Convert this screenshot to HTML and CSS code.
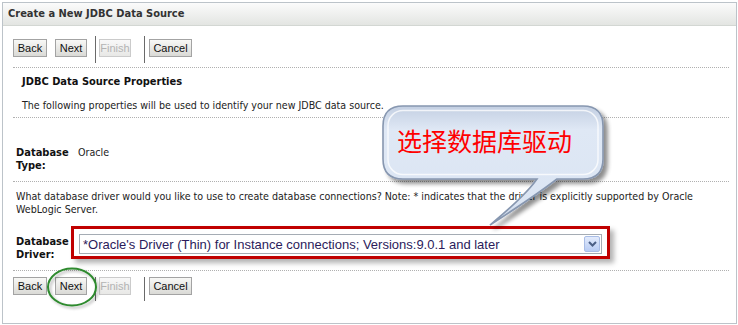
FILE: index.html
```html
<!DOCTYPE html>
<html lang="en">
<head>
<meta charset="utf-8">
<title>Create a New JDBC Data Source</title>
<link rel="stylesheet" href="styles.css">
</head>
<body>
<div class="frame">
  <div class="header">Create a New JDBC Data Source</div>
  <div class="body">
    <div class="toolbar top">
      <button type="button" class="btn btn-back">Back</button>
      <button type="button" class="btn btn-next">Next</button>
      <span class="sep sep1"></span>
      <button type="button" class="btn btn-finish" disabled>Finish</button>
      <span class="sep sep2"></span>
      <button type="button" class="btn btn-cancel">Cancel</button>
    </div>
    <div class="section props">
      <h2 class="title">JDBC Data Source Properties</h2>
      <p class="desc">The following properties will be used to identify your new JDBC data source.</p>
    </div>
    <div class="section type-row">
      <div class="row">
        <div class="label">Database Type:</div>
        <div class="value">Oracle</div>
      </div>
    </div>
    <div class="section driver-sec">
      <p class="note">What database driver would you like to use to create database connections? Note: * indicates that the driver is explicitly supported by Oracle<br>WebLogic Server.</p>
      <div class="row driver-row">
        <div class="label label-driver">Database Driver:</div>
        <div class="highlight">
          <div class="select">
            <span class="select-text">*Oracle's Driver (Thin) for Instance connections; Versions:9.0.1 and later</span>
            <span class="select-arrow"><svg width="9" height="6" viewBox="0 0 9 6"><path d="M1 1 L4.5 4.5 L8 1" fill="none" stroke="#4b5f86" stroke-width="2"/></svg></span>
          </div>
        </div>
      </div>
    </div>
    <div class="section bottom-sec">
      <div class="toolbar bottom">
        <button type="button" class="btn btn-back">Back</button>
        <button type="button" class="btn btn-next">Next</button>
        <span class="sep sep1"></span>
        <button type="button" class="btn btn-finish" disabled>Finish</button>
        <span class="sep sep2"></span>
        <button type="button" class="btn btn-cancel">Cancel</button>
      </div>
    </div>
  </div>
</div>
<svg class="overlay" width="738" height="325" viewBox="0 0 738 325">
  <defs>
    <linearGradient id="bub" x1="0" y1="0" x2="0" y2="1">
      <stop offset="0" stop-color="#c3cfe2"/>
      <stop offset="0.2" stop-color="#dfe8f5"/>
      <stop offset="0.8" stop-color="#dbe5f3"/>
      <stop offset="1" stop-color="#c9d5e7"/>
    </linearGradient>
    <filter id="sh" x="-10%" y="-10%" width="130%" height="140%">
      <feGaussianBlur in="SourceAlpha" stdDeviation="2.2"/>
      <feOffset dx="4" dy="4" result="o"/>
      <feComponentTransfer><feFuncA type="linear" slope="0.45"/></feComponentTransfer>
      <feMerge><feMergeNode/><feMergeNode in="SourceGraphic"/></feMerge>
    </filter>
    <filter id="sh2" x="-20%" y="-20%" width="150%" height="150%">
      <feGaussianBlur in="SourceAlpha" stdDeviation="1.5"/>
      <feOffset dx="2" dy="2"/>
      <feComponentTransfer><feFuncA type="linear" slope="0.3"/></feComponentTransfer>
      <feMerge><feMergeNode/><feMergeNode in="SourceGraphic"/></feMerge>
    </filter>
  </defs>
  <path d="M403 106 H583 Q603 106 603 126 V159 Q603 179 583 179 H557 Q535 196 490 225 Q525 196 537 179 H403 Q383 179 383 159 V126 Q383 106 403 106 Z" fill="url(#bub)" stroke="#8797b0" stroke-width="1.6" filter="url(#sh)"/>
  <rect x="388" y="110.5" width="210" height="64" rx="15" fill="none" stroke="#ffffff" stroke-opacity="0.75" stroke-width="1.5"/>
  <text class="callout-text" x="397" y="151">选择数据库驱动</text>
  <ellipse cx="72" cy="287" rx="24" ry="18.5" fill="none" stroke="#2e8a2e" stroke-width="2" filter="url(#sh2)"/>
</svg>
</body>
</html>
```
FILE: styles.css
```css
body {
  margin: 0;
  background: #fff;
  font-family: "DejaVu Sans Condensed", "DejaVu Sans", sans-serif;
  font-stretch: condensed;
  font-size: 10.6px;
  color: #222;
  position: relative;
  width: 738px;
  height: 325px;
  overflow: hidden;
}

.frame {
  margin: 2px 1px 0 2px;
  border: 1px solid #bcc3c9;
  height: 322px;
  box-sizing: border-box;
}

.header {
  height: 22px;
  border-bottom: 1px solid #d3d7d3;
  background: linear-gradient(#fbfbfb, #e3e5e2);
  padding-left: 5px;
  line-height: 22px;
  font-weight: bold;
  font-size: 11px;
  color: #333;
}

.body {
  padding: 0 7px 0 10px;
}

.toolbar {
  display: flex;
  align-items: flex-start;
}

.toolbar.top {
  margin-top: 10px;
  height: 27px;
  margin-bottom: 4px;
}

.toolbar.bottom {
  margin-top: 6px;
  height: 24px;
}

.btn {
  height: 18px;
  box-sizing: border-box;
  border: 1px solid #a3a3a3;
  background: linear-gradient(#f8f8f6, #dadad6);
  font: 11px "Liberation Sans", Arial, sans-serif;
  color: #111;
  display: flex;
  align-items: center;
  justify-content: center;
  padding: 0;
  margin: 0;
  border-radius: 0;
}

.top .btn {
  margin-top: 3px;
}

.btn:disabled {
  color: #b3b3b3;
  border-color: #cbcbcb;
  background: linear-gradient(#f8f8f8, #e8e8e6);
}

.btn-back { width: 34px; }
.btn-next { width: 32px; margin-left: 8px; }
.btn-finish { width: 32px; margin-left: 3px; }
.btn-cancel { width: 43px; margin-left: 4px; }

.top .btn-next { margin-top: 3px; }
.top .btn-finish { margin-top: 3px; }
.top .btn-cancel { margin-top: 3px; }

.sep {
  width: 1px;
  align-self: stretch;
  background: #6a6a6a;
}
.sep1 { margin-left: 8px; }
.sep2 { margin-left: 13px; }

.section {
  border-top: 1px dotted #b0b0b0;
}

.props {
  padding: 7px 0 0 9px;
}

.title {
  margin: 0;
  font-size: 11px;
  line-height: 14px;
  font-weight: bold;
  color: #111;
}

.desc {
  margin: 9px 0 5px;
  line-height: 14px;
}

.type-row {
  padding: 28px 0 9px;
}

.row {
  display: flex;
  align-items: flex-start;
  padding-left: 3px;
}

.label {
  width: 55px;
  flex: none;
  font-weight: bold;
  font-size: 11px;
  line-height: 13px;
  color: #111;
}

.value {
  padding-left: 7px;
  line-height: 13px;
}

.driver-sec {
  padding: 8px 0 9px;
}

.note {
  margin: 0;
  padding-left: 3px;
  line-height: 13px;
}

.driver-row {
  margin-top: 10px;
}

.label-driver {
  margin-top: 9px;
}

.highlight {
  width: 539px;
  box-sizing: border-box;
  border: 3px solid #c00000;
  padding: 5px 5px 2px 5px;
  box-shadow: 4px 4px 5px rgba(0, 0, 0, 0.3);
}

.select {
  height: 20px;
  box-sizing: border-box;
  border: 1px solid #a5acb4;
  background: #fff;
  display: flex;
  align-items: center;
  padding-left: 3px;
}

.select-text {
  font: 13px "Liberation Sans", Arial, sans-serif;
  color: #2b1b5b;
  white-space: nowrap;
}

.select-arrow {
  margin-left: auto;
  margin-right: 1px;
  width: 16px;
  height: 16px;
  box-sizing: border-box;
  border: 1px solid #a9bde6;
  border-radius: 2px;
  background: linear-gradient(#e3ebfc, #b8ccf4);
  display: flex;
  align-items: center;
  justify-content: center;
}

.select-arrow svg {
  display: block;
}

.overlay {
  position: absolute;
  left: 0;
  top: 0;
  pointer-events: none;
}

.callout-text {
  font-family: "Noto Sans CJK SC", sans-serif;
  font-size: 25px;
  fill: #ff0000;
}
```
